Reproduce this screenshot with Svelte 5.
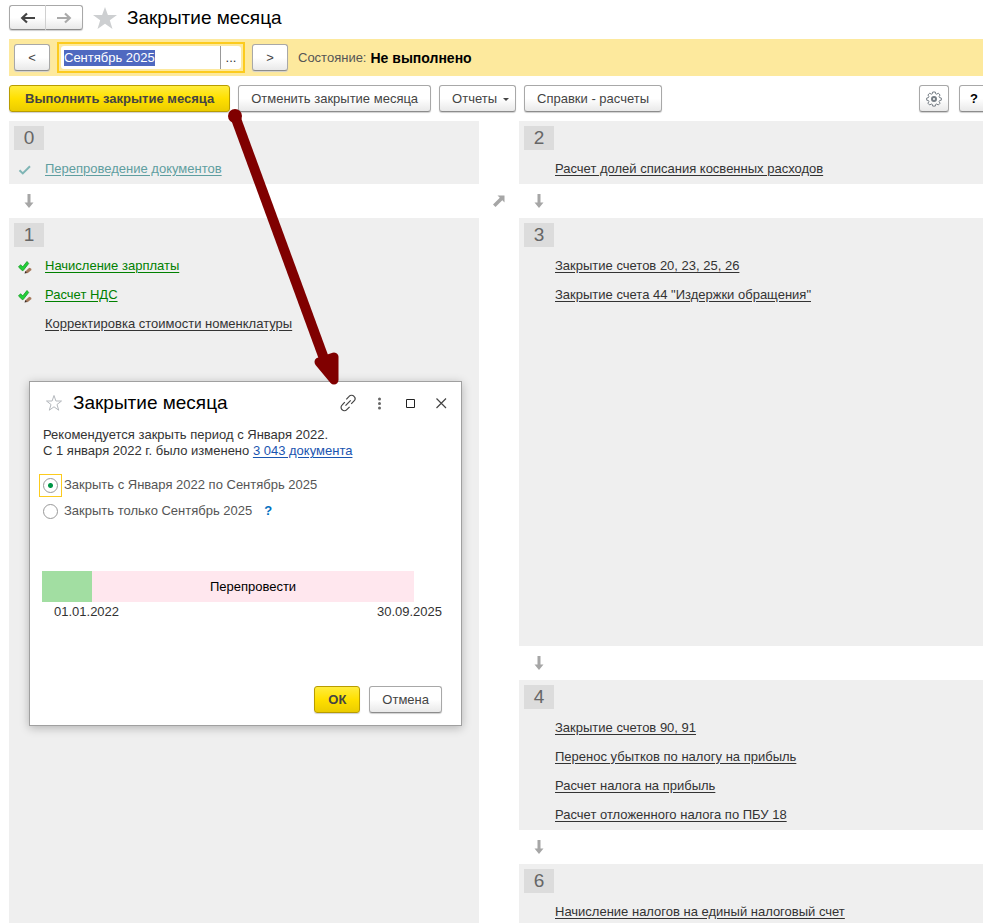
<script lang="ts">
    import { onMount } from "svelte";

    type Step = { title: string; state?: "skipped" | "done" };
    type Stage = { number: number; steps: Step[]; size?: "tall" | "fill" };

    const leftStages: Stage[] = [
        {
            number: 0,
            steps: [{ title: "Перепроведение документов", state: "skipped" }],
        },
        {
            number: 1,
            size: "fill",
            steps: [
                { title: "Начисление зарплаты", state: "done" },
                { title: "Расчет НДС", state: "done" },
                { title: "Корректировка стоимости номенклатуры" },
            ],
        },
    ];
    const rightStages: Stage[] = [
        {
            number: 2,
            steps: [{ title: "Расчет долей списания косвенных расходов" }],
        },
        {
            number: 3,
            size: "tall",
            steps: [
                { title: "Закрытие счетов 20, 23, 25, 26" },
                { title: 'Закрытие счета 44 "Издержки обращения"' },
            ],
        },
        {
            number: 4,
            steps: [
                { title: "Закрытие счетов 90, 91" },
                { title: "Перенос убытков по налогу на прибыль" },
                { title: "Расчет налога на прибыль" },
                { title: "Расчет отложенного налога по ПБУ 18" },
            ],
        },
        {
            number: 6,
            steps: [{ title: "Начисление налогов на единый налоговый счет" }],
        },
    ];

    let period = $state("Сентябрь 2025");
    let mode = $state("range");
    let periodInput: HTMLInputElement;

    onMount(() => {
        periodInput.focus();
        periodInput.select();
    });
</script>

{#snippet column(stages: Stage[])}
    <div class="column">
        {#each stages as stage, i}
            {#if i > 0}
                <div class="arrow-row">
                    <svg class="arrow-down" width="10" height="14" viewBox="0 0 10 14">
                        <path d="M3.5 0h3v8.5h3L5 14 .5 8.5h3z" />
                    </svg>
                </div>
            {/if}
            <section class="stage {stage.size ?? ''}">
                <div class="stage-number">{stage.number}</div>
                <ul class="steps">
                    {#each stage.steps as step}
                        <li class="step">
                            <span class="step-icon">
                                {#if step.state === "skipped"}
                                    <svg width="14" height="12" viewBox="0 0 14 12">
                                        <path class="check-thin" d="M1.5 6.2l3.3 3.2L12 2.3" />
                                    </svg>
                                {:else if step.state === "done"}
                                    <svg width="14" height="14" viewBox="0 0 14 14">
                                        <path class="check-bold" d="M.5 7l2-2.2 2.300 2L9 1.500l1.700 2L5.200 10.500h-1z" />
                                        <path class="brush-body" d="M7.300 11.500l3.900-3.800 1.900.7.4 1.600-4 3.200z" />
                                        <path class="brush-tip" d="M6.500 13.600l.8-2.600 1.900 1.900z" />
                                    </svg>
                                {/if}
                            </span>
                            <a class="step-link {step.state ?? ''}" href="#step">{step.title}</a>
                        </li>
                    {/each}
                </ul>
            </section>
        {/each}
    </div>
{/snippet}

<div class="page">
    <header class="title-row">
        <div class="history">
            <button class="btn" aria-label="Назад">
                <svg width="16" height="12" viewBox="0 0 16 12">
                    <path class="nav-arrow" d="M15 6H3M7 1.5L2.2 6 7 10.5" />
                </svg>
            </button>
            <button class="btn" aria-label="Вперед">
                <svg width="16" height="12" viewBox="0 0 16 12">
                    <path class="nav-arrow off" d="M1 6h12M9 1.5L13.8 6 9 10.5" />
                </svg>
            </button>
        </div>
        <svg class="star" width="24" height="22" viewBox="0 0 24 22">
            <path d="M12 0l2.9 8H24l-7.2 5.2L19.500 22 12 16.700 4.500 22l2.700-8.800L0 8h9.100z" />
        </svg>
        <h1>Закрытие месяца</h1>
    </header>

    <div class="period-bar">
        <button class="btn step-btn">&lt;</button>
        <div class="period">
            <input aria-label="Период" bind:value={period} bind:this={periodInput} />
            <button class="period-more" aria-label="Выбрать период">...</button>
        </div>
        <button class="btn step-btn">&gt;</button>
        <span class="status">Состояние:</span>
        <strong>Не выполнено</strong>
    </div>

    <div class="toolbar">
        <button class="btn primary">Выполнить закрытие месяца</button>
        <button class="btn">Отменить закрытие месяца</button>
        <button class="btn">Отчеты <span class="caret"></span></button>
        <button class="btn">Справки - расчеты</button>
        <button class="btn square settings" aria-label="Настройки">
            <svg width="16" height="16" viewBox="0 0 16 16">
                <path
                    class="gear"
                    d="M6.700 1h2.600l.4 1.800 1 .4 1.600-1 1.800 1.800-1 1.600.4 1 1.800.4v2.200l-1.800.4-.4 1 1 1.600-1.800 1.800-1.600-1-1 .4-.4 1.700H6.700l-.4-1.700-1-.4-1.600 1-1.800-1.800 1-1.600-.4-1-1.800-.4V7l1.800-.4.4-1-1-1.600 1.800-1.800 1.600 1 1-.4z"
                />
                <circle class="gear-hole" cx="8" cy="8" r="2" />
            </svg>
        </button>
        <button class="btn square help">?</button>
    </div>

    <main class="columns">
        {@render column(leftStages)}
        <div class="between">
            <svg class="arrow-side" width="12" height="12" viewBox="0 0 12 12">
                <path d="M4.500.5h7v7L9.300 5.300 2.500 12 0 9.500l6.800-6.700z" />
            </svg>
        </div>
        {@render column(rightStages)}
    </main>

    <div class="dialog" role="dialog" aria-labelledby="dialog-title">
        <div class="dialog-head">
            <svg class="star-outline" width="18" height="18" viewBox="0 0 18 18">
                <path d="M9 1.500l1.900 5.500h5.600l-4.500 3.500 1.700 5.700L9 12.800l-4.700 3.400L6 10.500 1.500 7h5.600z" />
            </svg>
            <h2 id="dialog-title">Закрытие месяца</h2>
            <button class="icon-btn" aria-label="Ссылка">
                <svg width="18" height="18" viewBox="0 0 18 18">
                    <path
                        class="thin"
                        d="M7.300 5.300l2.800-2.900a3.200 3.200 0 0 1 4.900 0 3.200 3.200 0 0 1 .1 4.500l-2.900 3M10.600 12.800l-2.800 2.900a3.200 3.200 0 0 1-4.700 0 3.200 3.200 0 0 1-.1-4.600l2.800-3M6.500 11.700l5.200-5.300"
                    />
                </svg>
            </button>
            <button class="icon-btn" aria-label="Еще">
                <svg width="18" height="18" viewBox="0 0 18 18">
                    <circle class="dots" cx="9.500" cy="5" r="1.500" />
                    <circle class="dots" cx="9.500" cy="9.500" r="1.500" />
                    <circle class="dots" cx="9.500" cy="14" r="1.500" />
                </svg>
            </button>
            <button class="icon-btn" aria-label="Развернуть">
                <svg width="18" height="18" viewBox="0 0 18 18">
                    <path class="frame" d="M5.500 5.500h8v8h-8z" />
                </svg>
            </button>
            <button class="icon-btn" aria-label="Закрыть">
                <svg width="18" height="18" viewBox="0 0 18 18">
                    <path class="thin" d="M4.500 4.500l9.500 9.500M14 4.500L4.500 14" />
                </svg>
            </button>
        </div>
        <div class="dialog-body">
            <p class="hint">
                Рекомендуется закрыть период с Января 2022.<br />
                С 1 января 2022 г. было изменено <a href="#documents">3 043 документа</a>
            </p>
            <div class="modes">
                <label class="mode">
                    <span class="radio-box" class:focused={mode === "range"}>
                        <input type="radio" value="range" bind:group={mode} />
                    </span>
                    Закрыть с Января 2022 по Сентябрь 2025
                </label>
                <div class="mode-row">
                    <label class="mode">
                        <span class="radio-box" class:focused={mode === "single"}>
                            <input type="radio" value="single" bind:group={mode} />
                        </span>
                        Закрыть только Сентябрь 2025
                    </label>
                    <button class="hint-btn">?</button>
                </div>
            </div>
            <div class="timeline">
                <div class="closed"></div>
                <div class="pending">Перепровести</div>
            </div>
            <div class="dates">
                <span>01.01.2022</span>
                <span>30.09.2025</span>
            </div>
            <div class="actions">
                <button class="btn primary">ОК</button>
                <button class="btn">Отмена</button>
            </div>
        </div>
    </div>

    <svg class="pointer" width="120" height="280" viewBox="0 0 120 280">
        <circle cx="10" cy="10" r="7" />
        <path class="shaft" d="M10 10l91 248" />
        <path class="head" d="M94 256l15-5v23z" />
    </svg>
</div>

<style>
    :global(body) {
        background: #fff;
        font-family: "Liberation Sans", Arial, sans-serif;
        font-size: 13px;
        line-height: 16px;
        color: #333;
    }
    .page {
        position: relative;
        display: flex;
        flex-direction: column;
        height: 100vh;
        padding-left: 9px;
        box-sizing: border-box;
        overflow: hidden;
    }
    button,
    input {
        font: inherit;
        color: inherit;
    }
    h1,
    h2 {
        margin: 0;
        font-size: 19px;
        line-height: 24px;
        font-weight: normal;
        color: #000;
    }
    .btn {
        display: inline-flex;
        align-items: center;
        justify-content: center;
        box-sizing: border-box;
        height: 27px;
        padding: 0 12px;
        border: 1px solid #a8a8a8;
        border-bottom-color: #8c8c8c;
        border-radius: 3px;
        background: linear-gradient(#fff 50%, #e9e9e9);
        box-shadow: 0 1px 1px #d0d0d0;
        color: #444;
        white-space: nowrap;
    }
    .btn.primary {
        padding: 0 13px;
        border-color: #b89c00;
        background: linear-gradient(#ffec3d, #ffe000 50%, #ebcc00);
        font-weight: bold;
    }
    .toolbar .primary {
        padding: 0 15px;
    }
    .btn.square {
        width: 30px;
        padding: 0;
    }

    .title-row {
        display: flex;
        align-items: center;
        flex: none;
        height: 35px;
        margin-bottom: 4px;
    }
    .history {
        display: flex;
    }
    .history .btn {
        width: 37px;
        height: 25px;
        padding: 0;
    }
    .history .btn:first-child {
        border-right-color: #d0d0d0;
        border-radius: 3px 0 0 3px;
    }
    .history .btn:last-child {
        border-left: 0;
        border-radius: 0 3px 3px 0;
    }
    .nav-arrow {
        fill: none;
        stroke: #444;
        stroke-width: 2.200;
    }
    .nav-arrow.off {
        stroke: #aaa;
    }
    .star {
        margin: 0 10px;
        fill: #cdcfd1;
    }

    .period-bar {
        display: flex;
        align-items: center;
        flex: none;
        height: 37px;
        padding-left: 5px;
        background: #fde99d;
    }
    .step-btn {
        width: 36px;
        padding: 0;
    }
    .period {
        display: flex;
        width: 188px;
        height: 31px;
        margin: 0 7px;
        padding: 2px;
        box-sizing: border-box;
        border: 2px solid #fccb1e;
        background: #fde99d;
    }
    .period input {
        flex: 1;
        min-width: 0;
        padding: 0 3px;
        border: 0;
        border-radius: 3px 0 0 3px;
        background: #fff;
        outline: 0;
    }
    .period input::selection {
        background: #4f69c0;
        color: #fff;
    }
    .period-more {
        width: 21px;
        padding: 0;
        border: 0;
        border-left: 1px solid #999;
        border-radius: 0 3px 3px 0;
        background: #fff;
    }
    .status {
        margin: 0 4px 0 10px;
        color: #555;
    }
    strong {
        font-size: 14px;
        color: #000;
    }

    .toolbar {
        display: flex;
        flex: none;
        gap: 8px;
        margin: 9px 0;
    }
    .caret {
        margin: 2px -6px 0 6px;
        border: 3px solid transparent;
        border-top-color: #444;
        border-bottom: 0;
    }
    .settings {
        margin-left: auto;
    }
    .help {
        margin: 0 -6px 0 2px;
        font-weight: bold;
        color: #000;
    }
    .gear {
        fill: none;
        stroke: #777f86;
    }
    .gear-hole {
        fill: none;
        stroke: #777f86;
        stroke-width: 2;
    }

    .columns {
        display: grid;
        grid-template-columns: 470px 40px 1fr;
        flex: 1;
    }
    .column {
        display: flex;
        flex-direction: column;
    }
    .between {
        padding: 74px 0 0 14px;
    }
    .arrow-row {
        display: flex;
        align-items: center;
        flex: none;
        height: 34px;
        padding-left: 15px;
    }
    .arrow-down,
    .arrow-side {
        display: block;
        fill: #a6a6a6;
    }
    .stage {
        flex: none;
        box-sizing: border-box;
        padding: 5px 5px 1px;
        background: #efefef;
    }
    .stage.tall {
        min-height: 428px;
    }
    .stage.fill {
        flex: 1;
    }
    .stage-number {
        width: 30px;
        margin-bottom: 4px;
        background: #dcdcdc;
        color: #666;
        font-size: 19px;
        line-height: 24px;
        text-align: center;
    }
    .steps {
        margin: 0;
        padding: 0;
        list-style: none;
    }
    .step {
        display: flex;
        align-items: center;
        height: 29px;
    }
    .step-icon {
        display: flex;
        width: 27px;
        padding: 2px 0 0 4px;
    }
    .step-link {
        color: #333;
        text-underline-offset: 2px;
    }
    .step-link.skipped {
        color: #5f9ea0;
    }
    .step-link.done {
        color: #008000;
    }
    .check-thin {
        fill: none;
        stroke: #7fb5b5;
        stroke-width: 2;
    }
    .check-bold {
        fill: #22d03a;
        stroke: #159a22;
        stroke-width: 0.8;
    }
    .brush-body {
        fill: #a5785a;
    }
    .brush-tip {
        fill: #3c2a20;
    }

    .dialog {
        position: absolute;
        top: 381px;
        left: 29px;
        display: flex;
        flex-direction: column;
        box-sizing: border-box;
        width: 433px;
        min-height: 345px;
        border: 1px solid #a0a0a0;
        background: #fff;
        box-shadow: 0 2px 9px rgba(0, 0, 0, 0.25);
    }
    .dialog-head {
        display: flex;
        align-items: center;
        height: 41px;
        padding: 0 5px 0 15px;
    }
    .dialog-head h2 {
        margin: 0 auto 0 10px;
    }
    .star-outline {
        fill: none;
        stroke: #b4b8bd;
    }
    .icon-btn {
        display: flex;
        justify-content: center;
        width: 31px;
        padding: 0;
        border: 0;
        background: none;
    }
    .thin {
        fill: none;
        stroke: #444;
        stroke-width: 1.200;
    }
    .dots {
        fill: #666;
    }
    .frame {
        fill: none;
        stroke: #222;
    }
    .dialog-body {
        display: flex;
        flex-direction: column;
        flex: 1;
        padding: 4px 19px 12px 12px;
    }
    .hint {
        margin: 0 0 13px 1px;
    }
    .hint a {
        color: #1a55b0;
        text-underline-offset: 2px;
    }
    .mode,
    .mode-row {
        display: flex;
        align-items: center;
        height: 26px;
        color: #555;
    }
    .radio-box {
        display: flex;
        margin: 0 2px 0 -3px;
        padding: 3px;
        border: 1px solid transparent;
    }
    .radio-box.focused {
        border-color: #fccb1e;
    }
    .radio-box input {
        appearance: none;
        width: 15px;
        height: 15px;
        margin: 0;
        border: 1px solid #999;
        border-radius: 50%;
        background: #fff;
    }
    .radio-box input:checked {
        background: radial-gradient(circle, #009646 2px, #fff 3px);
    }
    .hint-btn {
        margin-left: 12px;
        padding: 0;
        border: 0;
        background: none;
        color: #0070c0;
        font-weight: bold;
    }
    .timeline {
        display: flex;
        margin: 47px 28px 2px 0;
        line-height: 31px;
        text-align: center;
        color: #000;
    }
    .closed {
        width: 50px;
        background: #a2dea2;
    }
    .pending {
        flex: 1;
        background: #ffe7ee;
    }
    .dates {
        display: flex;
        justify-content: space-between;
        padding-left: 12px;
    }
    .actions {
        display: flex;
        justify-content: flex-end;
        gap: 9px;
        margin-top: auto;
    }

    /* callout from the toolbar button to the dialog */
    .pointer {
        position: absolute;
        top: 106px;
        left: 225px;
        fill: #800000;
        pointer-events: none;
    }
    .shaft {
        stroke: #800000;
        stroke-width: 10;
    }
    .head {
        stroke: #800000;
        stroke-width: 9;
        stroke-linejoin: round;
    }
</style>
